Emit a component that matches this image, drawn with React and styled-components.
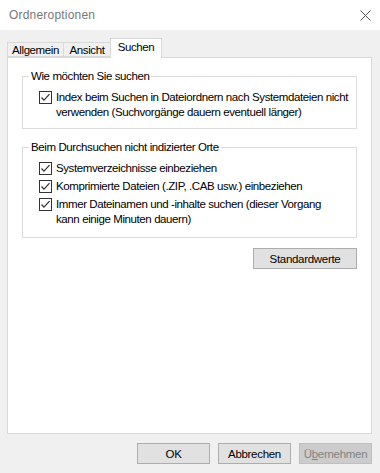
import React from 'react';
import styled, { createGlobalStyle } from 'styled-components';

const GlobalStyle = createGlobalStyle`
  html, body {
    margin: 0;
    padding: 0;
    background: #f0f0f0;
  }
  * {
    box-sizing: border-box;
  }
`;

const Window = styled.div`
  width: 380px;
  height: 473px;
  background: #f0f0f0;
  display: flex;
  flex-direction: column;
  font-family: 'Liberation Sans', Arial, sans-serif;
  font-size: 11.5px;
  letter-spacing: -0.4px;
  color: #000;
`;

const TitleBar = styled.div`
  height: 30px;
  background: #fff;
  display: flex;
  align-items: center;
  justify-content: space-between;
  padding: 0 9px 0 9px;
`;

const Title = styled.span`
  color: #777;
  font-size: 12px;
  letter-spacing: 0.2px;
`;

const Body = styled.div`
  flex: 1;
  display: flex;
  flex-direction: column;
  padding: 8px 8px 9px 7px;
`;

const TabStrip = styled.div`
  display: flex;
  align-items: flex-end;
  height: 20px;
  margin-bottom: -1px;
  position: relative;
  z-index: 1;
`;

const Tab = styled.div`
  height: ${(p) => (p.$active ? '20px' : '15px')};
  margin-bottom: ${(p) => (p.$active ? '0' : '1px')};
  margin-left: ${(p) => (p.$first ? '0' : '-1px')};
  width: ${(p) => p.$w}px;
  border: 1px solid #d9d9d9;
  border-bottom: ${(p) => (p.$active ? 'none' : '1px solid #d9d9d9')};
  background: ${(p) => (p.$active ? '#fff' : '#f0f0f0')};
  display: flex;
  align-items: center;
  justify-content: center;
  padding-top: ${(p) => (p.$active ? '0' : '1px')};
  padding-bottom: ${(p) => (p.$active ? '3px' : '0')};
  white-space: nowrap;
`;

const Panel = styled.div`
  flex: 1;
  background: #fff;
  border: 1px solid #d9d9d9;
  padding: 11px 14px 0 14px;
  display: flex;
  flex-direction: column;
`;

const Group = styled.fieldset`
  margin: 0 0 ${(p) => p.$gap || 0}px 0;
  border: 1px solid #dcdcdc;
  padding: 6px 6px ${(p) => p.$pb}px 16px;
  min-width: 0;
`;

const Legend = styled.legend`
  padding: 0 2px;
  margin-left: -10px;
  line-height: 15px;
`;

const Rows = styled.div`
  display: flex;
  flex-direction: column;
  gap: 3px;
`;

const Row = styled.label`
  display: flex;
  align-items: flex-start;
  gap: 4px;
  line-height: 15px;
`;

const Box = styled.svg`
  flex: none;
  width: 13px;
  height: 13px;
  margin-top: 1px;
`;

const ButtonBar = styled.div`
  display: flex;
  justify-content: ${(p) => p.$align || 'flex-end'};
  gap: 8px;
  margin-top: ${(p) => p.$mt}px;
`;

const Button = styled.button`
  width: ${(p) => p.$w || 73}px;
  height: 21px;
  padding: 0;
  font-family: inherit;
  font-size: 11.5px;
  letter-spacing: -0.3px;
  background: ${(p) => (p.disabled ? '#cccccc' : '#e1e1e1')};
  border: 1px solid ${(p) => (p.disabled ? '#bfbfbf' : '#adadad')};
  color: ${(p) => (p.disabled ? '#838383' : '#000')};
`;

const Check = () => (
  <Box viewBox="0 0 13 13">
    <rect x="0.5" y="0.5" width="12" height="12" fill="#fff" stroke="#333" />
    <polyline points="2.5,6.5 5,9.2 10.5,3.2" fill="none" stroke="#333" strokeWidth="1.2" />
  </Box>
);

const CloseIcon = () => (
  <svg width="11" height="11" viewBox="0 0 11 11">
    <path d="M0.5 0.5 L10.5 10.5 M10.5 0.5 L0.5 10.5" stroke="#555" strokeWidth="1" />
  </svg>
);

const Option = ({ children }) => (
  <Row>
    <Check />
    <span>{children}</span>
  </Row>
);

export default function App() {
  return (
    <>
      <GlobalStyle />
      <Window>
        <TitleBar>
          <Title>Ordneroptionen</Title>
          <CloseIcon />
        </TitleBar>
        <Body>
          <TabStrip>
            <Tab $first $w={57}>Allgemein</Tab>
            <Tab $w={48}>Ansicht</Tab>
            <Tab $active $w={52}>Suchen</Tab>
          </TabStrip>
          <Panel>
            <Group $pb={8} $gap={11}>
              <Legend>Wie möchten Sie suchen</Legend>
              <Rows>
                <Option>
                  Index beim Suchen in Dateiordnern nach Systemdateien nicht
                  verwenden (Suchvorgänge dauern eventuell länger)
                </Option>
              </Rows>
            </Group>
            <Group $pb={10}>
              <Legend>Beim Durchsuchen nicht indizierter Orte</Legend>
              <Rows>
                <Option>Systemverzeichnisse einbeziehen</Option>
                <Option>Komprimierte Dateien (.ZIP, .CAB usw.) einbeziehen</Option>
                <Option>
                  Immer Dateinamen und -inhalte suchen (dieser Vorgang
                  <br />
                  kann einige Minuten dauern)
                </Option>
              </Rows>
            </Group>
            <ButtonBar $mt={10}>
              <Button $w={104}>Standardwerte</Button>
            </ButtonBar>
          </Panel>
          <ButtonBar $mt={9}>
            <Button>OK</Button>
            <Button>Abbrechen</Button>
            <Button disabled>
              Ü<u>b</u>ernehmen
            </Button>
          </ButtonBar>
        </Body>
      </Window>
    </>
  );
}
